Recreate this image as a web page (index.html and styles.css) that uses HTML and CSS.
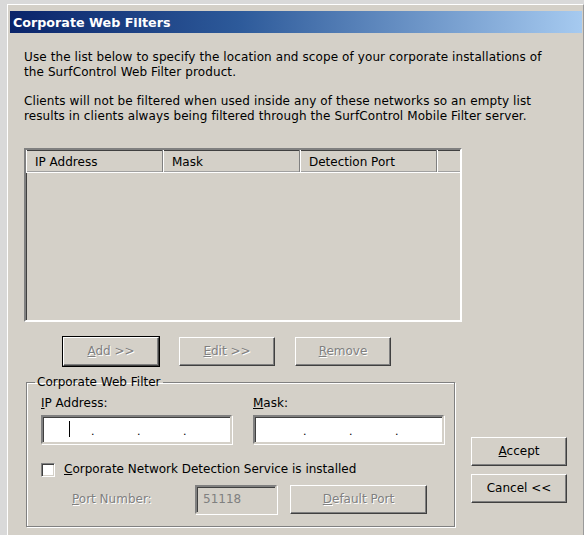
FILE: index.html
```html
<!DOCTYPE html>
<html lang="en">
<head>
<meta charset="utf-8">
<title>Corporate Web Filters</title>
<link rel="stylesheet" href="styles.css">
</head>
<body>
<div class="window">
  <div class="titlebar"><span class="title">Corporate Web Filters</span></div>
  <div class="client">
    <p class="intro">Use the list below to specify the location and scope of your corporate installations of<br>the SurfControl Web Filter product.</p>
    <p class="intro">Clients will not be filtered when used inside any of these networks so an empty list<br>results in clients always being filtered through the SurfControl Mobile Filter server.</p>

    <div class="main">
      <div class="left">
        <div class="listview">
          <div class="lv-header">
            <div class="lv-col col-ip">IP Address</div>
            <div class="lv-col col-mask">Mask</div>
            <div class="lv-col col-port">Detection Port</div>
            <div class="lv-col col-fill"></div>
          </div>
        </div>

        <div class="list-buttons">
          <button class="btn btn-default" disabled><u>A</u>dd &gt;&gt;</button>
          <button class="btn" disabled><u>E</u>dit &gt;&gt;</button>
          <button class="btn" disabled><u>R</u>emove</button>
        </div>

        <fieldset class="group">
          <legend>Corporate Web Filter</legend>
          <div class="addr-row">
            <div class="field">
              <label class="field-label"><u>I</u>P Address:</label>
              <div class="ipbox">
                <span class="seg"><span class="caret"></span></span><span class="dot">.</span>
                <span class="seg"></span><span class="dot">.</span>
                <span class="seg"></span><span class="dot">.</span>
                <span class="seg"></span>
              </div>
            </div>
            <div class="field">
              <label class="field-label"><u>M</u>ask:</label>
              <div class="ipbox">
                <span class="seg"></span><span class="dot">.</span>
                <span class="seg"></span><span class="dot">.</span>
                <span class="seg"></span><span class="dot">.</span>
                <span class="seg"></span>
              </div>
            </div>
          </div>

          <div class="check-row">
            <span class="checkbox"></span>
            <span><u>C</u>orporate Network Detection Service is installed</span>
          </div>

          <div class="port-row">
            <span class="port-label"><u>P</u>ort Number:</span>
            <div class="portbox">51118</div>
            <button class="btn btn-wide" disabled><u>D</u>efault Port</button>
          </div>
        </fieldset>
      </div>

      <div class="actions">
        <button class="btn"><u>A</u>ccept</button>
        <button class="btn">Cancel &lt;&lt;</button>
      </div>
    </div>
  </div>
</div>
</body>
</html>
```

FILE: styles.css
```css
html, body {
  margin: 0;
  padding: 0;
}

body {
  background: #d9d9d9;
  font-family: "DejaVu Sans", sans-serif;
  font-size: 12px;
  line-height: 15px;
  color: #000;
  overflow: hidden;
}

/* dialog frame */
.window {
  margin: 4px 0 0 7px;
  border-top: 1px solid #fff;
  border-left: 1px solid #fff;
  border-right: 1px solid #9a9a9a;
  background: #d4d0c8;
  min-height: 540px;
}

.titlebar {
  height: 22px;
  margin: 6px 1px 0 2px;
  background: linear-gradient(to right, #0a246a 0%, #2d5a9a 40%, #a6caf0 100%);
  display: flex;
  align-items: center;
  padding-left: 3px;
}

.title {
  color: #fff;
  font-weight: bold;
  font-size: 12.7px;
}

.client {
  padding: 0 16px;
}

.intro {
  margin: 17px 0 0;
  white-space: nowrap;
  letter-spacing: 0.1px;
}

.intro + .intro {
  margin-top: 14px;
}

.main {
  display: flex;
  margin-top: 24px;
}

.left {
  width: 438px;
}

/* list view */
.listview {
  height: 170px;
  border: 2px solid;
  border-color: #808080 #fff #fff #808080;
  box-shadow: inset 1px 1px #404040;
  background: #d4d0c8;
}

.lv-header {
  display: flex;
  height: 22px;
  border-bottom: 1px solid #fff;
  box-shadow: inset 0 -1px #a0a0a0;
}

.lv-col {
  box-sizing: border-box;
  height: 22px;
  padding: 5px 0 0 8px;
  border-left: 1px solid #fff;
  border-right: 1px solid #808080;
  white-space: nowrap;
}

.col-ip { width: 137px; }
.col-mask { width: 137px; }
.col-port { width: 137px; }
.col-fill { width: 23px; border-right: none; }

/* push buttons */
.btn {
  box-sizing: border-box;
  width: 96px;
  height: 29px;
  padding: 0;
  font: inherit;
  color: #000;
  background: #d4d0c8;
  border: 1px solid;
  border-color: #fff #404040 #404040 #fff;
  box-shadow: inset -1px -1px #808080;
  border-radius: 0;
}

.btn:disabled {
  color: #808080;
  text-shadow: 1px 1px #fff;
}

.btn-default {
  outline: 1px solid #000;
}

.btn-wide {
  width: 137px;
}

.list-buttons {
  display: flex;
  gap: 20px;
  margin: 15px 0 0 39px;
}

/* group box */
.group {
  margin: 9px 0 0 2px;
  width: 429px;
  box-sizing: border-box;
  padding: 6px 11px 12px 14px;
  border: 1px solid #808080;
  box-shadow: inset 1px 1px #fff, 1px 1px #fff;
  min-width: 0;
}

.group legend {
  padding: 0 2px;
  margin-left: -6px;
}

.addr-row {
  display: flex;
  gap: 21px;
}

.field {
  display: flex;
  flex-direction: column;
  gap: 4px;
}

.ipbox {
  box-sizing: border-box;
  width: 191px;
  height: 29px;
  display: flex;
  align-items: center;
  padding-left: 4px;
  background: #fff;
  border: 2px solid;
  border-color: #808080 #d4d0c8 #d4d0c8 #808080;
  box-shadow: inset 1px 1px #404040, 1px 1px #fff;
}

.ipbox .seg {
  width: 44px;
  height: 17px;
  display: flex;
  justify-content: center;
}

.ipbox .dot {
  width: 2px;
  font-size: 11px;
  line-height: 10px;
  margin-top: 4px;
}

.caret {
  width: 1px;
  height: 16px;
  background: #000;
}

.check-row {
  display: flex;
  align-items: center;
  gap: 9px;
  margin-top: 18px;
}

.checkbox {
  box-sizing: border-box;
  width: 14px;
  height: 14px;
  background: #fff;
  border: 1px solid;
  border-color: #808080 #fff #fff #808080;
  box-shadow: inset 1px 1px #404040, inset -1px -1px #d4d0c8;
}

.port-row {
  display: flex;
  align-items: center;
  margin-top: 8px;
}

.port-label {
  width: 123px;
  padding-left: 31px;
  color: #808080;
  text-shadow: 1px 1px #fff;
}

.portbox {
  box-sizing: border-box;
  width: 82px;
  height: 29px;
  padding: 5px 0 0 6px;
  color: #808080;
  background: #d4d0c8;
  border: 2px solid;
  border-color: #808080 #d4d0c8 #d4d0c8 #808080;
  box-shadow: inset 1px 1px #404040, 1px 1px #fff;
  margin-right: 13px;
}

/* Accept / Cancel */
.actions {
  display: flex;
  flex-direction: column;
  gap: 8px;
  align-self: flex-end;
  margin: 0 0 24px 9px;
}
```
